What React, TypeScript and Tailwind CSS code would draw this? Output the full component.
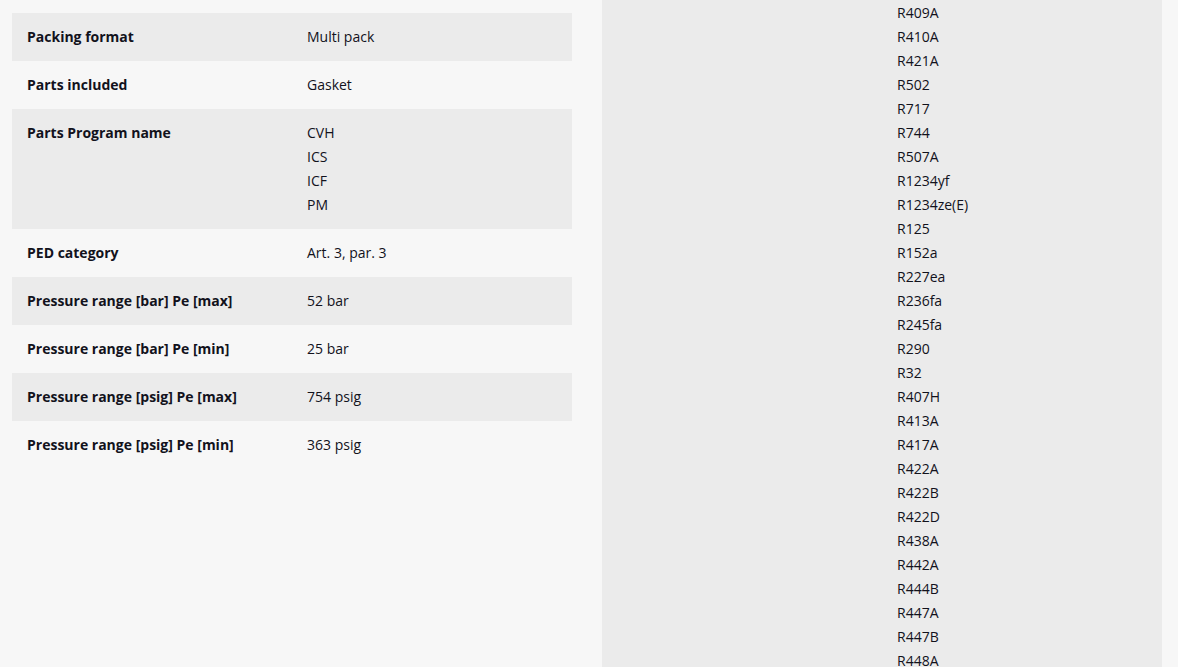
const specs: { label: string; values: string[] }[] = [
  { label: 'Packing format', values: ['Multi pack'] },
  { label: 'Parts included', values: ['Gasket'] },
  { label: 'Parts Program name', values: ['CVH', 'ICS', 'ICF', 'PM'] },
  { label: 'PED category', values: ['Art. 3, par. 3'] },
  { label: 'Pressure range [bar] Pe [max]', values: ['52 bar'] },
  { label: 'Pressure range [bar] Pe [min]', values: ['25 bar'] },
  { label: 'Pressure range [psig] Pe [max]', values: ['754 psig'] },
  { label: 'Pressure range [psig] Pe [min]', values: ['363 psig'] },
]

const refrigerants = [
  'R409A', 'R410A', 'R421A', 'R502', 'R717', 'R744', 'R507A', 'R1234yf',
  'R1234ze(E)', 'R125', 'R152a', 'R227ea', 'R236fa', 'R245fa', 'R290', 'R32',
  'R407H', 'R413A', 'R417A', 'R422A', 'R422B', 'R422D', 'R438A', 'R442A',
  'R444B', 'R447A', 'R447B', 'R448A',
]

export default function App() {
  return (
    <div
      className="h-[667px] overflow-hidden bg-[#f7f7f7] text-[#12121c] text-[14px] leading-[24px]"
      style={{ fontFamily: '"Open Sans", "Noto Sans", Arial, sans-serif' }}
    >
      <div className="flex gap-[30px] pl-[12px]">
        {/* Left spec table */}
        <div className="w-[560px] pt-[13px]">
          {specs.map((row, i) => (
            <div
              key={row.label}
              className={`grid grid-cols-[280px_280px] py-3 ${i % 2 === 0 ? 'bg-[#ebebeb]' : ''}`}
            >
              <div className="px-[15px] font-bold">{row.label}</div>
              <div className="px-[15px]">
                {row.values.map(v => (
                  <div key={v}>{v}</div>
                ))}
              </div>
            </div>
          ))}
        </div>

        {/* Right column: refrigerant list */}
        <div className="w-[560px] h-[667px] bg-[#ebebeb] pt-[1px]">
          <div className="grid grid-cols-[280px_280px]">
            <div className="px-[15px]" />
            <div className="px-[15px]">
              {refrigerants.map(r => (
                <div key={r}>{r}</div>
              ))}
            </div>
          </div>
        </div>
      </div>
    </div>
  )
}
